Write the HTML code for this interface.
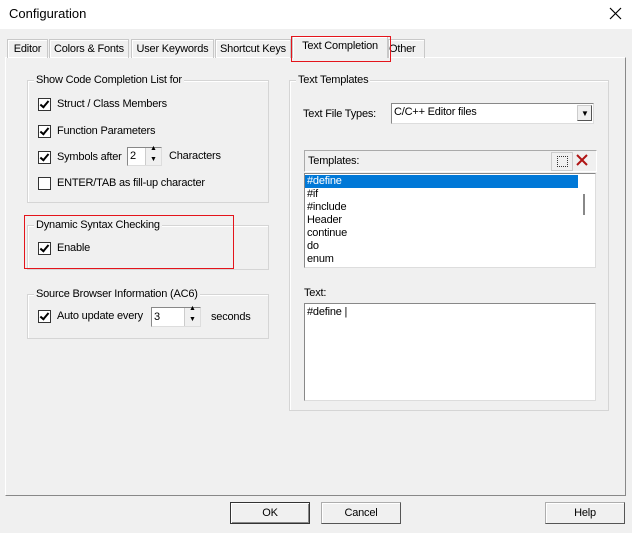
<!DOCTYPE html><html><head><style>
body{margin:0;width:632px;height:533px;background:#f0f0f0;font-family:"Liberation Sans",sans-serif;font-size:11px;letter-spacing:-0.2px;color:#000;position:relative;overflow:hidden}
.a{position:absolute;white-space:nowrap}
.grp{position:absolute;border:1px solid #d5d5d5;box-shadow:inset 1px 1px 0 #fff}
.lg{position:absolute;background:#f0f0f0;padding:0 2px;top:-7px;left:6px;white-space:nowrap}
.cb{position:absolute;width:11px;height:11px;border:1px solid #333;background:#fff}
.cb.c::after{content:"";position:absolute;left:3px;top:0px;width:3px;height:7px;border:solid #000;border-width:0 2px 2px 0;transform:rotate(40deg)}
.btn{position:absolute;height:20px;border:1px solid #adadad;border-right-color:#555;border-bottom-color:#555;background:#f0f0f0;text-align:center;line-height:20px;box-shadow:inset 1px 1px 0 #fff}
.tab{position:absolute;top:39px;height:19px;line-height:18px;border:1px solid #c8c8c8;border-bottom:none;text-align:center;box-sizing:border-box;overflow:hidden;box-shadow:inset 1px 1px 0 #fff}
.spin{position:absolute;background:#fff;border:1px solid #888;border-right-color:#ddd;border-bottom-color:#ddd}
.arr{position:absolute;right:0;top:0;width:15px;height:100%;background:#f0f0f0;border-left:1px solid #ccc}
</style></head><body>
<div class="a" style="left:0;top:0;width:632px;height:29px;background:#fff"></div>
<div class="a" style="left:9px;top:6px;font-size:13px;letter-spacing:0">Configuration</div>
<svg class="a" style="left:609px;top:7px" width="13" height="13"><path d="M1 1L12 12M12 1L1 12" stroke="#000" stroke-width="1.2"/></svg>
<div class="a" style="left:5px;top:57px;width:619px;height:437px;border:1px solid #fff;border-right-color:#888;border-bottom-color:#888"></div>
<div class="tab" style="left:7px;width:41px">Editor</div>
<div class="tab" style="left:49px;width:80px">Colors &amp; Fonts</div>
<div class="tab" style="left:131px;width:83px">User Keywords</div>
<div class="tab" style="left:215px;width:76px">Shortcut Keys</div>
<div class="tab" style="left:388px;width:37px;text-align:left">Other</div>
<div class="tab" style="left:292px;top:36px;height:22px;width:96px;background:#f0f0f0">Text Completion</div>
<div class="a" style="left:291px;top:36px;width:98px;height:24px;border:1px solid #e4141b"></div>

<div class="grp" style="left:27px;top:80px;width:240px;height:121px"><span class="lg">Show Code Completion List for</span></div>
<div class="cb c" style="left:38px;top:98px"></div><div class="a" style="left:57px;top:98px">Struct / Class Members</div>
<div class="cb c" style="left:38px;top:125px"></div><div class="a" style="left:57px;top:125px">Function Parameters</div>
<div class="cb c" style="left:38px;top:151px"></div><div class="a" style="left:57px;top:151px">Symbols after</div>
<div class="spin" style="left:127px;top:147px;width:33px;height:17px"><span style="position:absolute;left:2px;top:2px">2</span><div class="arr"><span style="position:absolute;left:4px;top:-3px;font-size:7px">▲</span><span style="position:absolute;left:4px;top:8px;font-size:7px">▼</span></div></div>
<div class="a" style="left:169px;top:150px">Characters</div>
<div class="cb" style="left:38px;top:177px"></div><div class="a" style="left:57px;top:177px">ENTER/TAB as fill-up character</div>

<div class="grp" style="left:27px;top:225px;width:240px;height:43px"><span class="lg">Dynamic Syntax Checking</span></div>
<div class="cb c" style="left:38px;top:242px"></div><div class="a" style="left:57px;top:242px">Enable</div>
<div class="a" style="left:24px;top:215px;width:208px;height:52px;border:1px solid #e4141b"></div>

<div class="grp" style="left:27px;top:294px;width:240px;height:43px"><span class="lg">Source Browser Information (AC6)</span></div>
<div class="cb c" style="left:38px;top:310px"></div><div class="a" style="left:57px;top:310px">Auto update every</div>
<div class="spin" style="left:151px;top:307px;width:48px;height:18px"><span style="position:absolute;left:2px;top:3px">3</span><div class="arr"><span style="position:absolute;left:4px;top:-3px;font-size:7px">▲</span><span style="position:absolute;left:4px;top:8px;font-size:7px">▼</span></div></div>
<div class="a" style="left:211px;top:311px">seconds</div>

<div class="grp" style="left:289px;top:80px;width:318px;height:329px"><span class="lg">Text Templates</span></div>
<div class="a" style="left:303px;top:108px">Text File Types:</div>
<div class="a" style="left:391px;top:103px;width:201px;height:19px;background:#fff;border:1px solid #888;border-right-color:#ddd;border-bottom-color:#ddd"><span style="position:absolute;left:2px;top:2px">C/C++ Editor files</span><div style="position:absolute;right:1px;top:1px;width:15px;height:16px;background:#f0f0f0;border:1px solid #ccc;border-right-color:#555;border-bottom-color:#555;box-sizing:border-box"><span style="position:absolute;left:3px;top:3px;font-size:8px">▼</span></div></div>
<div class="a" style="left:304px;top:150px;width:291px;height:20px;border:1px solid #aaa;border-right-color:#fff;border-bottom-color:#fff"><span style="position:absolute;left:3px;top:4px">Templates:</span>
<div style="position:absolute;left:246px;top:1px;width:20px;height:17px;border:1px solid #ccc"></div>
<div style="position:absolute;left:252px;top:5px;width:9px;height:9px;border:1px dotted #333"></div>
<svg style="position:absolute;left:270px;top:2px" width="14" height="14"><path d="M2 2L12 12M12 2L2 12" stroke="#b01515" stroke-width="2"/></svg></div>
<div class="a" style="left:304px;top:173px;width:290px;height:93px;background:#fff;border:1px solid #888;border-right-color:#ddd;border-bottom-color:#ddd;overflow:hidden;line-height:13px">
<div style="background:#0078d7;color:#fff;width:271px;padding-left:2px;margin-top:1px">#define</div>
<div style="padding-left:2px">#if<br>#include<br>Header<br>continue<br>do<br>enum</div>
<div style="position:absolute;left:278px;top:20px;width:2px;height:21px;background:#888"></div></div>
<div class="a" style="left:304px;top:287px">Text:</div>
<div class="a" style="left:304px;top:303px;width:290px;height:96px;background:#fff;border:1px solid #888;border-right-color:#ddd;border-bottom-color:#ddd"><span style="position:absolute;left:2px;top:2px">#define |</span></div>

<div class="btn" style="left:230px;top:502px;width:78px;border-color:#333;box-shadow:inset 1px 1px 0 #fff,inset -1px -1px 0 #888">OK</div>
<div class="btn" style="left:321px;top:502px;width:78px">Cancel</div>
<div class="btn" style="left:545px;top:502px;width:78px">Help</div>
</body></html>
